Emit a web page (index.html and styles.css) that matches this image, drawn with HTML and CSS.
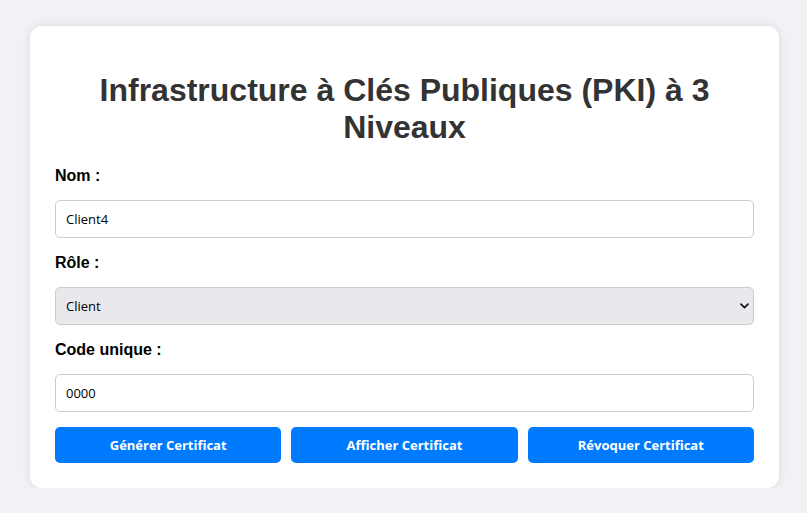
FILE: index.html
```html
<!DOCTYPE html>
<html lang="fr">
<head>
<meta charset="utf-8">
<title>PKI à 3 Niveaux</title>
<link rel="stylesheet" href="styles.css">
</head>
<body>
<div class="card">
  <h1 class="title">Infrastructure à Clés Publiques (PKI) à 3 Niveaux</h1>
  <label class="label" for="nom">Nom :</label>
  <input class="field" id="nom" type="text" value="Client4">
  <label class="label" for="role">Rôle :</label>
  <div class="select-wrap">
    <select class="field select" id="role">
      <option>Client</option>
      <option>Serveur</option>
    </select>
    <svg class="chevron" width="9" height="6" viewBox="0 0 9 6" aria-hidden="true">
      <path d="M1 1.2 L4.5 4.6 L8 1.2" fill="none" stroke="#111" stroke-width="1.7" stroke-linecap="round" stroke-linejoin="round"/>
    </svg>
  </div>
  <label class="label" for="code">Code unique :</label>
  <input class="field" id="code" type="text" value="0000">
  <div class="actions">
    <button class="btn" type="button">Générer Certificat</button>
    <button class="btn" type="button">Afficher Certificat</button>
    <button class="btn" type="button">Révoquer Certificat</button>
  </div>
</div>
</body>
</html>
```
FILE: styles.css
```css
html, body {
  margin: 0;
  padding: 0;
}
body {
  background: #f0f2f5;
  font-family: "Liberation Sans", Arial, sans-serif;
  color: #000;
}
.card {
  box-sizing: border-box;
  width: 749px;
  margin: 26px 28px 0 30px;
  padding: 25px;
  background: #fff;
  border-radius: 12px;
  box-shadow: 0 0 10px rgba(0, 0, 0, 0.1);
}
.title {
  font-size: 32px;
  font-weight: bold;
  text-align: center;
  color: #333;
  margin: 21.44px 0 20.44px;
}
.label {
  display: block;
  font-size: 16px;
  font-weight: bold;
  margin-bottom: 15px;
}
.field {
  display: block;
  box-sizing: border-box;
  width: 100%;
  height: 38px;
  margin: 0 0 16px;
  padding: 0 10px;
  border: 1px solid #ccc;
  border-radius: 5px;
  font-family: "Open Sans", sans-serif;
  font-size: 13px;
  color: #000;
  background: #fff;
  outline: none;
}
.select-wrap {
  position: relative;
}
.select {
  -webkit-appearance: none;
  appearance: none;
  background: #e9e9ed;
  padding-left: 10px;
}
.chevron {
  position: absolute;
  right: 5px;
  top: 16px;
  pointer-events: none;
}
.actions {
  display: flex;
  gap: 10px;
  margin-top: -1px;
}
.btn {
  flex: 1;
  height: 36px;
  border: none;
  border-radius: 5px;
  background: #007bff;
  color: #fff;
  font-family: "Open Sans", sans-serif;
  font-size: 13px;
  font-weight: bold;
  cursor: pointer;
}
```
